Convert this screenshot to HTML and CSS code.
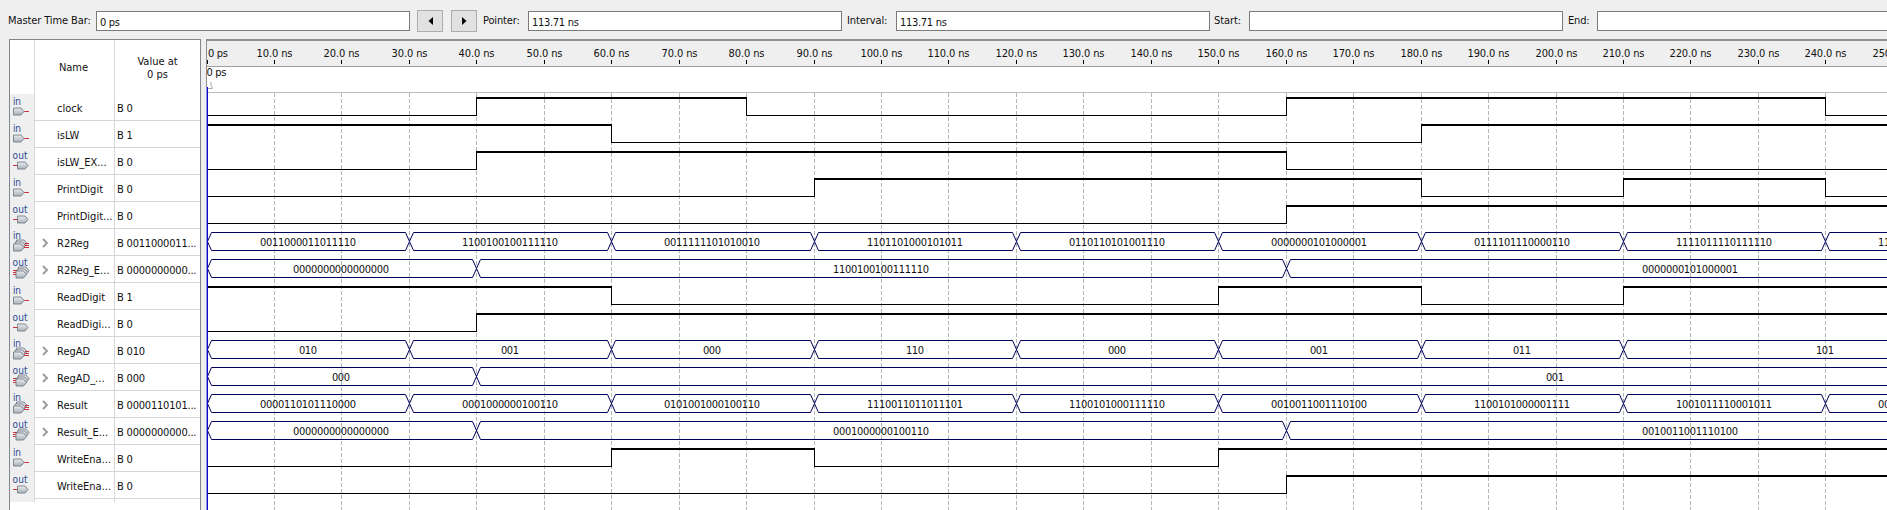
FILE: index.html
```html
<!DOCTYPE html>
<html lang="en">
<head>
<meta charset="utf-8">
<title>Simulation Waveform Editor</title>
<link rel="stylesheet" href="styles.css">
</head>
<body>
<svg class="defs" width="0" height="0">
  <defs>
    <linearGradient id="metal" x1="0" y1="0" x2="0" y2="1">
      <stop offset="0" stop-color="#e9ecef"/>
      <stop offset="1" stop-color="#a9b1ba"/>
    </linearGradient>
    <symbol id="gate" viewBox="0 0 12 8" overflow="visible">
      <path d="M.5 .5H8L11 4L8 7.500H.5Z" fill="url(#metal)" stroke="#757d86" stroke-width=".9"/>
    </symbol>
  </defs>
</svg>
<header class="toolbar">
  <span class="label label-master">Master Time Bar:</span>
  <div class="field">0 ps</div>
  <button class="step step-prev"><svg width="5" height="8"><path d="M5 0V8L0.500 4Z"/></svg></button>
  <button class="step step-next"><svg width="5" height="8"><path d="M0 0V8L4.500 4Z"/></svg></button>
  <span class="label label-pointer">Pointer:</span>
  <div class="field">113.71 ns</div>
  <span class="label label-interval">Interval:</span>
  <div class="field">113.71 ns</div>
  <span class="label label-start">Start:</span>
  <div class="field"></div>
  <span class="label label-end">End:</span>
  <div class="field"></div>
</header>
<main class="workspace">
  <section class="signals">
    <div class="signals-head">
      <div class="cell-icon"></div>
      <div class="cell-name"><span>Name</span></div>
      <div class="cell-value"><span>Value at<br>0 ps</span></div>
    </div>
    <div id="signal-rows"></div>
  </section>
  <section class="waves">
    <svg id="wave-canvas" width="1681" height="469" viewBox="206 41 1681 469"></svg>
  </section>
</main>
<script src="waves.js"></script>
</body>
</html>
```

FILE: styles.css
```css
* { box-sizing: border-box; }

body {
  margin: 0;
  width: 1887px;
  height: 510px;
  overflow: hidden;
  display: flex;
  flex-direction: column;
  background: #efefef;
  color: #111;
  font: 11px/14px "DejaVu Sans Condensed", "DejaVu Sans", sans-serif;
  font-stretch: condensed;
}

.defs { position: absolute; }

.toolbar {
  flex: none;
  height: 39px;
  padding: 10px 0 0 8px;
  display: flex;
  align-items: flex-start;
}

.label {
  flex: none;
  padding-top: 4px;
  white-space: nowrap;
}
.label-master { width: 88px; letter-spacing: -0.1px; }
.label-pointer { width: 51px; padding-left: 6px; letter-spacing: -0.15px; }
.label-interval { width: 54px; padding-left: 5px; letter-spacing: -0.1px; }
.label-start { width: 39px; padding-left: 4px; letter-spacing: -0.1px; }
.label-end { width: 34px; padding-left: 5px; letter-spacing: -0.15px; }

.field {
  flex: none;
  width: 314px;
  height: 20px;
  margin-top: 1px;
  padding: 4px 0 0 3px;
  border: 1px solid #7a7a7a;
  background: #fff;
  letter-spacing: -0.3px;
}

.step {
  flex: none;
  width: 26px;
  height: 22px;
  padding: 0;
  display: flex;
  align-items: center;
  justify-content: center;
  border: 1px solid #adadad;
  background: #e1e1e1;
}
.step-prev { margin-left: 7px; }
.step-next { margin-left: 8px; }

.workspace {
  flex: 1;
  min-height: 0;
  display: flex;
  gap: 5px;
  padding-left: 9px;
}

.signals {
  flex: none;
  width: 192px;
  border: 1px solid #83868c;
  border-bottom: 0;
  background: #fff;
}

.signals-head,
.signal {
  display: grid;
  grid-template-columns: 25px 80px 1fr;
}

.signals-head { height: 54px; text-align: center; }
.signals-head > div { border-right: 1px solid #dcdcdc; }
.signals-head .cell-name { padding: 21px 2px 0 0; }
.signals-head .cell-value { padding-top: 15px; line-height: 13px; border-right: 0; }

.signal {
  height: 27px;
  border-bottom: 1px solid #d6d6d6;
  white-space: nowrap;
}
.signal .cell-icon { background: #efefef; border-right: 1px solid #d6d6d6; }
.signal .cell-name {
  display: flex;
  padding: 8px 0 0 7px;
  border-right: 1px solid #d6d6d6;
}
.signal .cell-value { padding: 8px 0 0 2px; letter-spacing: -0.2px; }
.arrow { flex: none; width: 15px; height: 12px; }
.arrow path { fill: none; stroke: #9b9b9b; stroke-width: 1.900; }
.port-text { font-size: 10px; fill: #2b4a94; }
.port-wire { stroke: #c8313d; stroke-width: 1; }

.waves {
  flex: 1;
  min-width: 0;
  border-top: 2px solid #8f8f8f;
  background: #fff;
}
#wave-canvas { display: block; }

.ruler { fill: #efefef; }
.rule { fill: #9f9f9f; }
.rule-light { fill: #bdbdbd; }
.tick { fill: #000; }
.grid { stroke: #b4b4b4; stroke-dasharray: 4 2; }
.level { fill: #000; }
.bus { fill: none; stroke: #00005c; stroke-width: 1; }
.cursor { fill: #0a0ac0; }
.cursor-edge { fill: #8c8cf0; }
.edge { fill: #8f8f8f; }
.handle { fill: none; stroke: #a9a9a9; }
#wave-canvas text { fill: #111; }
```

FILE: waves.js
```js
// Bit signals list [time, level]; bus signals list [time, value]. Times in ns.
const signals = [
  { name: 'clock', dir: 'in', value: 'B 0', bits: [[0, 0], [40, 1], [80, 0], [160, 1], [240, 0]] },
  { name: 'isLW', dir: 'in', value: 'B 1', bits: [[0, 1], [60, 0], [180, 1]] },
  { name: 'isLW_EX...', dir: 'out', value: 'B 0', bits: [[0, 0], [40, 1], [160, 0]] },
  { name: 'PrintDigit', dir: 'in', value: 'B 0', bits: [[0, 0], [90, 1], [180, 0], [210, 1], [240, 0]] },
  { name: 'PrintDigit...', dir: 'out', value: 'B 0', bits: [[0, 0], [160, 1]] },
  { name: 'R2Reg', dir: 'in', value: 'B 0011000011...', end: 270, bus: [[0, '0011000011011110'], [30, '1100100100111110'], [60, '0011111101010010'], [90, '1101101000101011'], [120, '0110110101001110'], [150, '0000000101000001'], [180, '0111101110000110'], [210, '1111011110111110'], [240, '1100000000000000']] },
  { name: 'R2Reg_E...', dir: 'out', value: 'B 0000000000...', end: 280, bus: [[0, '0000000000000000'], [40, '1100100100111110'], [160, '0000000101000001']] },
  { name: 'ReadDigit', dir: 'in', value: 'B 1', bits: [[0, 1], [60, 0], [150, 1], [180, 0], [210, 1]] },
  { name: 'ReadDigi...', dir: 'out', value: 'B 0', bits: [[0, 0], [40, 1]] },
  { name: 'RegAD', dir: 'in', value: 'B 010', end: 270, bus: [[0, '010'], [30, '001'], [60, '000'], [90, '110'], [120, '000'], [150, '001'], [180, '011'], [210, '101']] },
  { name: 'RegAD_...', dir: 'out', value: 'B 000', end: 360, bus: [[0, '000'], [40, '001']] },
  { name: 'Result', dir: 'in', value: 'B 0000110101...', end: 270, bus: [[0, '0000110101110000'], [30, '0001000000100110'], [60, '0101001000100110'], [90, '1110011011011101'], [120, '1100101000111110'], [150, '0010011001110100'], [180, '1100101000001111'], [210, '1001011110001011'], [240, '0000000000000000']] },
  { name: 'Result_E...', dir: 'out', value: 'B 0000000000...', end: 280, bus: [[0, '0000000000000000'], [40, '0001000000100110'], [160, '0010011001110100']] },
  { name: 'WriteEna...', dir: 'in', value: 'B 0', bits: [[0, 0], [60, 1], [90, 0], [150, 1]] },
  { name: 'WriteEna...', dir: 'out', value: 'B 0', bits: [[0, 0], [160, 1]] }
];

const RIGHT = 1887;
const ROW_TOP = 94;
const ROW_H = 27;
const xAt = ns => Math.floor(207 + 6.745 * ns);

const rect = (cls, x, y, w, h) => `<rect class="${cls}" x="${x}" y="${y}" width="${w}" height="${h}"/>`;
const text = (s, x, y, len) => `<text x="${x}" y="${y}" textLength="${len}">${s}</text>`;

function portIcon(s) {
  const isIn = s.dir === 'in';
  const label = `<text class="port-text" x="${isIn ? 3 : 2.5}" y="${s.bus ? 10 : 11}" textLength="${isIn ? 8 : 15}">${s.dir}</text>`;
  const gate = (x, y) => `<use href="#gate" x="${x}" y="${y}" width="12" height="8"/>`;
  const wire = (x, y, w) => `<path class="port-wire" d="M${x} ${y}h${w}"/>`;
  let body;
  if (!s.bus) {
    body = isIn ? wire(14, 17.5, 5) + gate(3, 13.5) : wire(3, 17.5, 5) + gate(7, 13.5);
  } else if (isIn) {
    body = gate(6, 10.5) + gate(4.5, 12.5) + gate(3, 14.5) + wire(15, 14.5, 4) + wire(14.5, 16.5, 4.5) + wire(14, 18.5, 5);
  } else {
    body = wire(3, 14.5, 5) + wire(3, 16.5, 5) + wire(3, 18.5, 5) + gate(8, 10.5) + gate(6.8, 12.5) + gate(5.5, 14.5);
  }
  return `<svg width="24" height="26">${label}${body}</svg>`;
}

document.getElementById('signal-rows').innerHTML = signals.map(s => `
  <div class="signal">
    <div class="cell-icon">${portIcon(s)}</div>
    <div class="cell-name"><svg class="arrow">${s.bus ? '<path d="M1 2L5 6L1 10"/>' : ''}</svg><span>${s.name}</span></div>
    <div class="cell-value">${s.value}</div>
  </div>`).join('');

let out = rect('ruler', 206, 41, 1681, 25) + rect('rule', 206, 66, 1681, 1) + rect('rule-light', 206, 92, 1681, 1);

for (let t = 0; t <= 250; t += 10) {
  const x = xAt(t);
  out += rect('tick', x, 60, 1, 4);
  if (t === 0) {
    out += text('0 ps', 208, 57, 20);
  } else {
    const len = t < 100 ? 36 : 42;
    out += text(`${t}.0 ns`, x + 0.5 - len / 2, 57, len);
    out += `<path class="grid" d="M${x + 0.5} 93V510"/>`;
  }
}
out += text('0 ps', 206.5, 76, 20);

signals.forEach((s, i) => {
  const top = ROW_TOP + ROW_H * i;
  if (s.bits) {
    s.bits.forEach(([t, level], k) => {
      const x = xAt(t);
      const end = k + 1 < s.bits.length ? xAt(s.bits[k + 1][0]) : RIGHT;
      out += level ? rect('level', x, top + 3, end - x + 1, 2) : rect('level', x, top + 21, end - x, 1);
      if (k) out += rect('level', x, top + 3, 1, 19);
    });
    return;
  }
  const hi = top + 3.5, mid = top + 12.5, lo = top + 21.5;
  s.bus.forEach(([t, value], k) => {
    const x0 = xAt(t) + 0.5;
    const x1 = xAt(k + 1 < s.bus.length ? s.bus[k + 1][0] : s.end) + 0.5;
    out += `<path class="bus" d="M${x1 - 4} ${hi}H${x0 + 4}L${x0} ${mid}L${x0 + 4} ${lo}H${x1 - 4}L${x1} ${mid}Z"/>`;
    const len = value.length * 6;
    out += text(value, Math.floor((x0 + x1) / 2 - len / 2 - 0.5), top + 17, len);
  });
});

out += rect('edge', 206, 41, 1, 46);
out += '<path class="handle" d="M208 88.500H212.500L211 85V82"/>';
out += rect('cursor-edge', 206, 87, 1, 423) + rect('cursor', 207, 87, 1, 423);

document.getElementById('wave-canvas').innerHTML = out;
```
